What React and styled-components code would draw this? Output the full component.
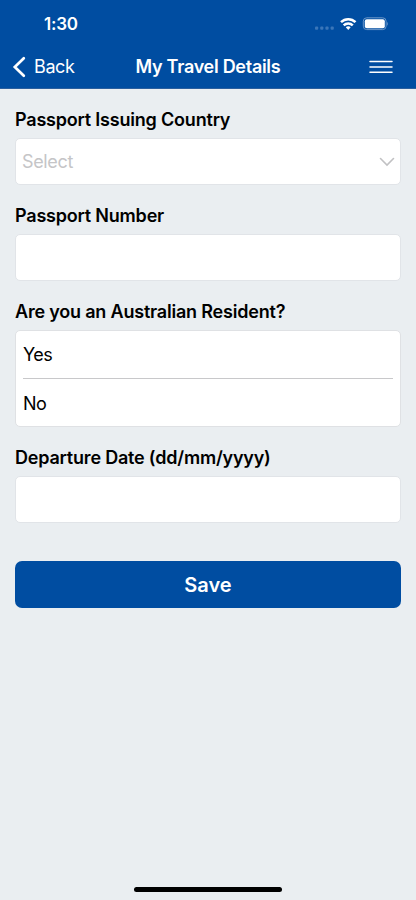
import React from "react";
import styled, { createGlobalStyle } from "styled-components";

const Global = createGlobalStyle`
  * { box-sizing: border-box; }
  body {
    margin: 0;
    background: #eaeef1;
    color: #000;
    font-family: Inter, "Liberation Sans", sans-serif;
  }
`;
const Screen = styled.div`
  height: 900px;
  display: flex;
  flex-direction: column;
  background: #eaeef1;
  overflow: hidden;
`;
const Top = styled.header`
  height: 89px;
  background: #004da1;
  border-bottom: 1px solid #2a5f9f;
  color: #fff;
`;
const StatusBar = styled.div`
  height: 45px;
  display: flex;
  justify-content: space-between;
  align-items: center;
  padding: 3px 28px 0 44px;
`;
const Time = styled.span`
  font-size: 17px;
  line-height: 20px;
  font-weight: 600;
  letter-spacing: -0.2px;
`;
const StatusIcons = styled.div`
  display: flex;
  align-items: center;
  height: 14px;
`;
const Nav = styled.nav`
  height: 43px;
  display: grid;
  grid-template-columns: 120px 1fr 120px;
  align-items: center;
`;
const Back = styled.div`
  display: flex;
  align-items: center;
  gap: 8px;
  padding-left: 12px;
  font-size: 18px;
  line-height: 22px;
  letter-spacing: -0.4px;
`;
const Title = styled.h1`
  margin: 0;
  font-size: 18px;
  line-height: 22px;
  font-weight: 600;
  letter-spacing: -0.28px;
  text-align: center;
  white-space: nowrap;
`;
const Menu = styled.div`
  display: flex;
  justify-content: flex-end;
  padding-right: 23px;
`;
const Form = styled.main`
  flex: 1;
  padding: 19px 15px 0;
`;
const Field = styled.section`
  margin-bottom: 19px;
`;
const Label = styled.div`
  margin-bottom: 6px;
  font-size: 18px;
  line-height: 24px;
  font-weight: 600;
  letter-spacing: -0.2px;
  white-space: nowrap;
`;
const Box = styled.div`
  height: 47px;
  display: flex;
  align-items: center;
  justify-content: space-between;
  padding: 0 5px 0 6px;
  border: 1px solid #e1e4e8;
  border-radius: 5px;
  background: #fff;
  color: #c5c5c7;
  font-size: 18px;
  letter-spacing: -0.35px;
`;
const Options = styled.div`
  height: 97px;
  padding: 0 7px;
  border: 1px solid #dfe1e4;
  border-radius: 5px;
  background: #fff;
`;
const Option = styled.div`
  height: 47px;
  display: flex;
  align-items: center;
  font-size: 18px;
  letter-spacing: -0.5px;
  & + & {
    height: 49px;
    padding-top: 1px;
    border-top: 1px solid #c8c8ca;
  }
`;
const Save = styled.button`
  display: block;
  width: 100%;
  height: 47px;
  margin-top: 38px;
  padding: 0;
  border: 0;
  border-radius: 7px;
  background: #004da1;
  color: #fff;
  font: 600 20px Inter, sans-serif;
`;
const HomeBar = styled.div`
  width: 148px;
  height: 5px;
  margin: 0 auto 8px;
  border-radius: 3px;
  background: #000;
`;

const StatusGlyphs = () => (
  <svg width="74" height="14" viewBox="314 17 74 14" fill="none">
    <g fill="#3a76b9">
      <rect x="315" y="26.5" width="3.2" height="3.2" rx="1" />
      <rect x="320.2" y="26.5" width="3.2" height="3.2" rx="1" />
      <rect x="325.4" y="26.5" width="3.2" height="3.2" rx="1" />
      <rect x="330.6" y="26.5" width="3.2" height="3.2" rx="1" />
    </g>
    <g stroke="#fff" strokeWidth="2.5">
      <path d="M341 22.2c4-4 10.5-4 14.5 0" />
      <path d="M343.7 25.4c2.5-2.5 6.6-2.5 9.1 0" />
    </g>
    <path d="M345.8 27.3c1.4-1.4 3.5-1.4 4.9 0l-2.45 2.6Z" fill="#fff" />
    <rect x="363.3" y="17.8" width="22.8" height="11.8" rx="3.4" stroke="#6b97c9" />
    <rect x="364.8" y="19.2" width="20" height="9" rx="2" fill="#fff" />
    <path d="M387.3 22c1.1.6 1.1 3 0 3.6Z" fill="#6b97c9" />
  </svg>
);

export default function App() {
  return (
    <>
      <Global />
      <Screen>
        <Top>
          <StatusBar>
            <Time>1:30</Time>
            <StatusIcons><StatusGlyphs /></StatusIcons>
          </StatusBar>
          <Nav>
            <Back>
              <svg width="14" height="22" viewBox="0 0 14 22" fill="none" stroke="#fff" strokeWidth="2.7" strokeLinecap="round" strokeLinejoin="miter">
                <path d="M11.8 2.2 2.8 11l9 8.8" />
              </svg>
              Back
            </Back>
            <Title>My Travel Details</Title>
            <Menu>
              <svg width="24" height="14" stroke="#fff" strokeWidth="1.5" strokeLinecap="round">
                <path d="M1 1.5h22M1 7h22M1 12.3h22" />
              </svg>
            </Menu>
          </Nav>
        </Top>
        <Form>
          <Field>
            <Label>Passport Issuing Country</Label>
            <Box>
              Select
              <svg width="16" height="10" fill="none" stroke="#c1c1c3" strokeWidth="1.6" strokeLinecap="round">
                <path d="m1.5 1.5 6.5 6.5 6.5-6.5" />
              </svg>
            </Box>
          </Field>
          <Field>
            <Label>Passport Number</Label>
            <Box />
          </Field>
          <Field>
            <Label>Are you an Australian Resident?</Label>
            <Options>
              <Option>Yes</Option>
              <Option>No</Option>
            </Options>
          </Field>
          <Field>
            <Label>Departure Date (dd/mm/yyyy)</Label>
            <Box />
          </Field>
          <Save>Save</Save>
        </Form>
        <HomeBar />
      </Screen>
    </>
  );
}
